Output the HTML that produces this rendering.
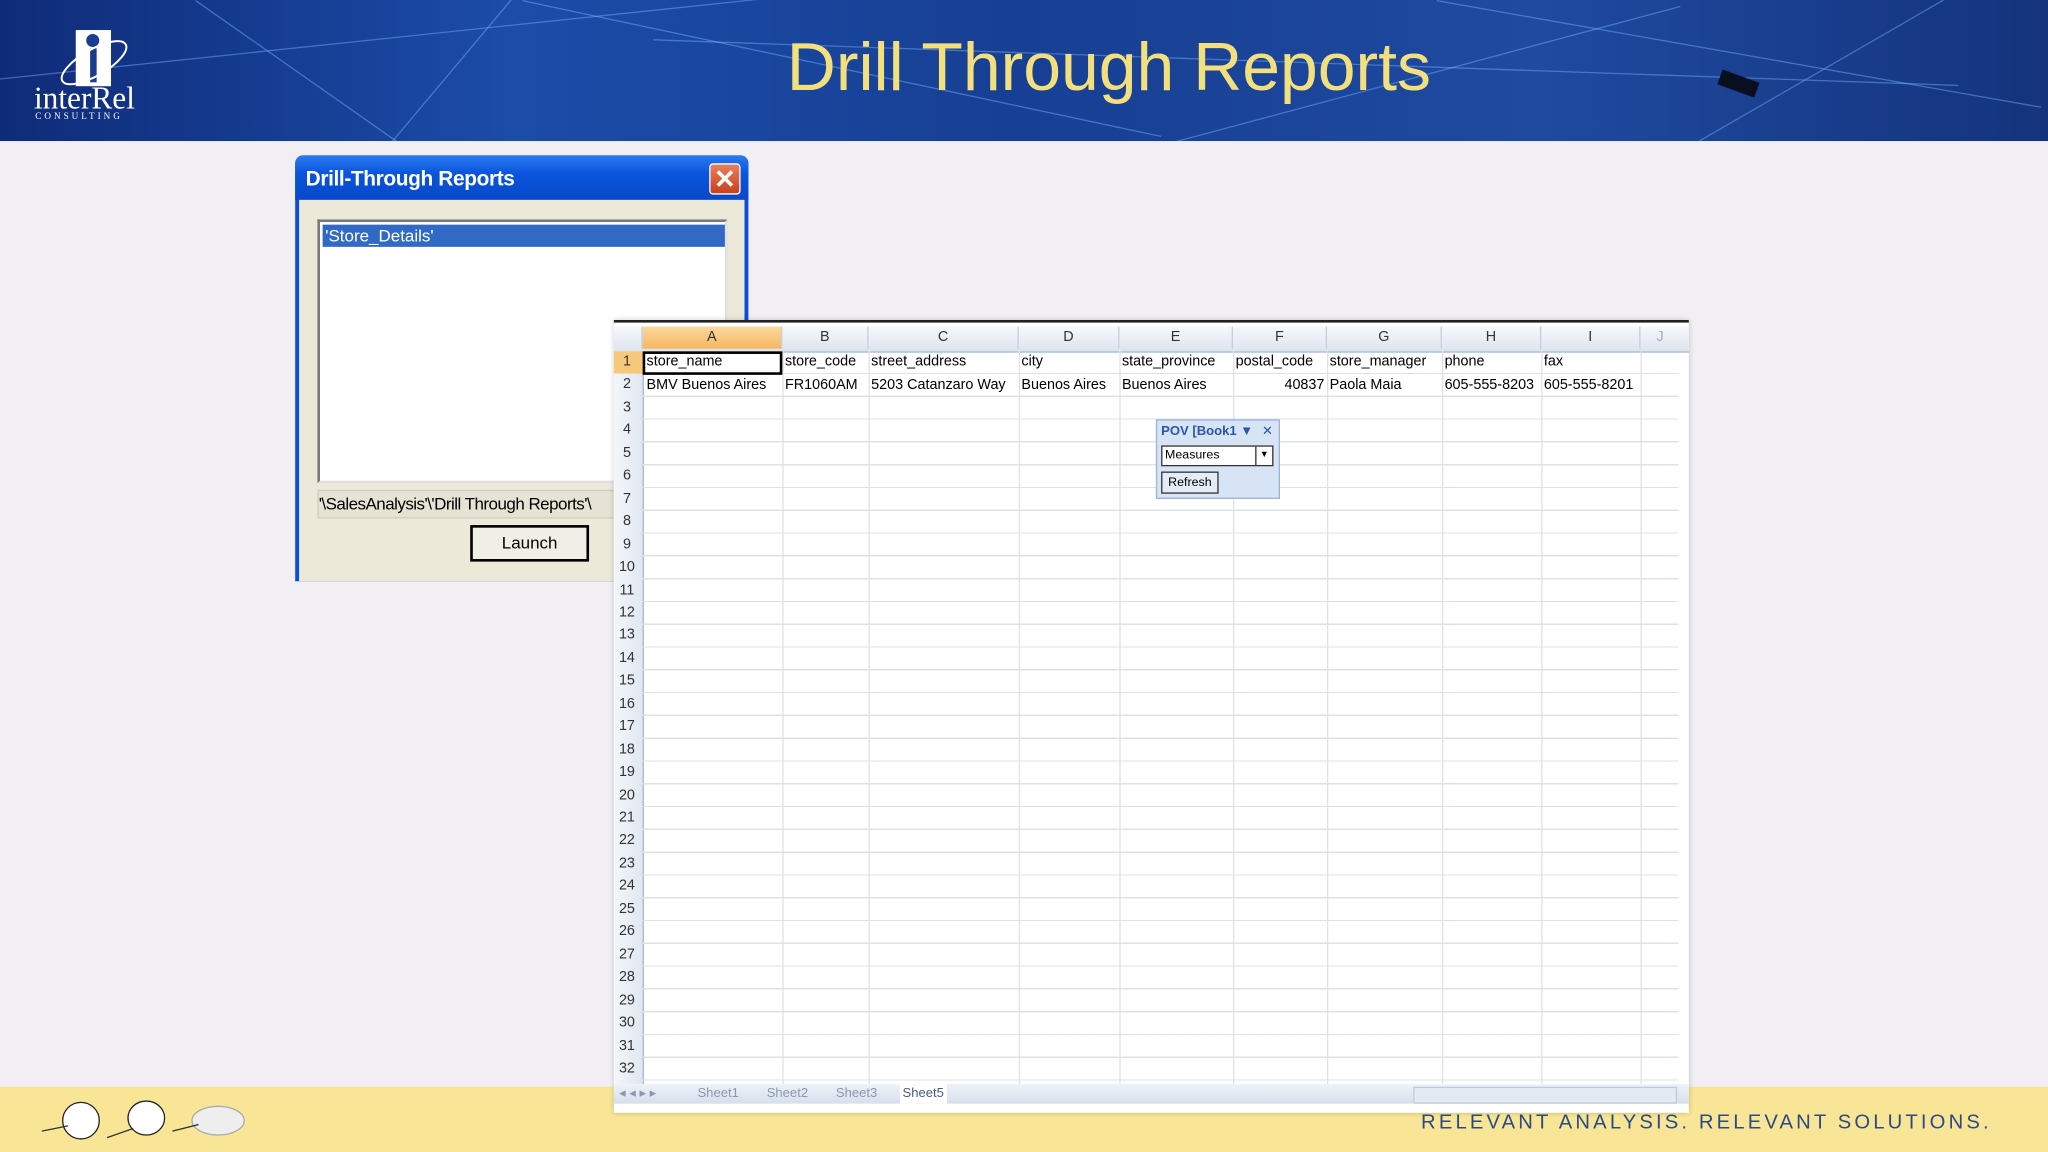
<!DOCTYPE html>
<html><head><meta charset="utf-8"><style>
html,body{margin:0;padding:0;width:2048px;height:1152px;overflow:hidden;background:#f1eff3;}
#w{position:absolute;left:0;top:0;width:1568px;height:882px;transform:scale(1.306122);transform-origin:0 0;font-family:"Liberation Sans",sans-serif;}
.a{position:absolute;}
#hdr{left:0;top:0;width:1568px;height:108px;background:linear-gradient(90deg,#0f2b78 0%,#1b4ca8 25%,#173f93 50%,#1f4aa0 75%,#14337c 100%);overflow:hidden;}
.ln{position:absolute;height:1px;background:rgba(120,180,255,.45);transform-origin:0 0;}
#title{left:0;width:1568px;top:22px;text-align:center;padding-left:130px;box-sizing:border-box;color:#f3e07c;font-size:52px;}
#foot{left:0;top:832px;width:1568px;height:50px;background:#f8e696;}
#dlg{left:226px;top:119px;width:347px;height:326px;background:#0a4fd6;border-radius:6px 6px 0 0;}
.c{position:absolute;font-size:11px;color:#000;white-space:nowrap;line-height:17px;}
.rn{position:absolute;left:0;width:20px;text-align:center;font-size:11px;color:#333;line-height:17.45px;}
.ch{position:absolute;top:0;height:17px;text-align:center;font-size:11px;line-height:17px;color:#333;border-right:1px solid #c5cfdc;box-sizing:border-box;}
.vl{position:absolute;top:22px;width:1px;height:561px;background:#dde2ea;}
</style></head><body><div id="w">
<div id="hdr" class="a">
<div class="ln" style="left:150px;top:0;width:300px;transform:rotate(35deg)"></div>
<div class="ln" style="left:300px;top:108px;width:250px;transform:rotate(-50deg)"></div>
<div class="ln" style="left:0;top:60px;width:700px;transform:rotate(-6deg)"></div>
<div class="ln" style="left:400px;top:0;width:500px;transform:rotate(12deg)"></div>
<div class="ln" style="left:900px;top:108px;width:400px;transform:rotate(-15deg)"></div>
<div class="ln" style="left:1100px;top:0;width:470px;transform:rotate(10deg)"></div>
<div class="ln" style="left:1300px;top:108px;width:300px;transform:rotate(-30deg)"></div>
<div class="ln" style="left:500px;top:30px;width:1000px;transform:rotate(2deg)"></div>
<div class="a" style="left:1316px;top:58px;width:30px;height:12px;background:#0a0f20;transform:rotate(20deg)"></div>
<svg class="a" style="left:40px;top:18px" width="70" height="60"><rect x="18" y="5" width="27" height="43" fill="#fff"/><circle cx="31" cy="13" r="5" fill="#1a3d90"/><rect x="29" y="19" width="5" height="26" fill="#1a3d90"/><ellipse cx="32" cy="30" rx="28" ry="10" fill="none" stroke="#fff" stroke-width="1.5" transform="rotate(-30 32 30)"/></svg>
<div class="a" style="left:26px;top:63px;color:#fff;font-family:'Liberation Serif',serif;font-size:24px;">interRel</div>
<div class="a" style="left:27px;top:85px;color:#fff;font-family:'Liberation Serif',serif;font-size:7px;letter-spacing:2.3px;">CONSULTING</div>
<div id="title" class="a">Drill Through Reports</div>
</div>
<div id="foot" class="a">
<svg class="a" style="left:22px;top:4px" width="170" height="42"><g fill="#fff" stroke="#222" stroke-width="1"><ellipse cx="40" cy="22" rx="14" ry="14"/><ellipse cx="90" cy="20" rx="14" ry="13"/><ellipse cx="145" cy="22" rx="20" ry="11" fill="#eee" stroke="#aaa"/></g><g stroke="#333" stroke-width="1"><line x1="10" y1="30" x2="30" y2="26"/><line x1="60" y1="35" x2="80" y2="28"/><line x1="110" y1="30" x2="130" y2="25"/></g></svg>
<div class="a" style="left:1088px;top:19px;color:#2b4a86;font-size:15.5px;letter-spacing:2.4px;">RELEVANT ANALYSIS. RELEVANT SOLUTIONS.</div>
</div>
<div id="dlg" class="a">
<div class="a" style="left:0;top:0;width:347px;height:34px;border-radius:6px 6px 0 0;background:linear-gradient(#2a7af0,#0a55dc 40%,#0848c8)"></div>
<div class="a" style="left:8px;top:10px;color:#fff;font-size:16px;font-weight:bold;letter-spacing:-.3px;">Drill-Through Reports</div>
<div class="a" style="left:317px;top:6px;width:24px;height:24px;border:1px solid #fff;border-radius:3px;background:linear-gradient(#e8805a,#c9401c);color:#fff;font-size:20px;font-weight:bold;line-height:24px;text-align:center;box-sizing:border-box;">✕</div>
<div class="a" style="left:3px;top:34px;width:341px;height:292px;background:#ece9d8;"></div>
<div class="a" style="left:17px;top:49px;width:314px;height:202px;background:#fff;border:2px solid #7a7a7a;border-right-color:#e0e0e0;border-bottom-color:#e0e0e0;box-sizing:border-box;"></div>
<div class="a" style="left:21px;top:53px;width:308px;height:17px;background:#316ac5;color:#fff;font-size:13px;line-height:17px;padding-left:2px;box-sizing:border-box;">'Store_Details'</div>
<div class="a" style="left:17px;top:256px;width:230px;height:20px;background:#e6e3d4;border:1px solid #d0cdc0;font-size:13px;line-height:20px;overflow:hidden;white-space:nowrap;letter-spacing:-.4px;">'\SalesAnalysis'\'Drill Through Reports'\</div>
<div class="a" style="left:134px;top:283px;width:91px;height:28px;border:2px solid #000;background:#f0efe6;box-sizing:border-box;text-align:center;font-size:13px;line-height:24px;">Launch</div>
</div>
<div class="a" style="left:470px;top:245px;width:823px;height:605px;background:#fff;border-top:2px solid #222;box-shadow:0 0 4px rgba(0,0,0,.2);">
<div class="a" style="left:0;top:3px;width:823px;height:19px;background:linear-gradient(#f6f8fc,#dde4ee);border-bottom:1px solid #9eb6ce;"></div>
<div class="a" style="left:0;top:22px;width:22px;height:561px;background:linear-gradient(90deg,#f4f6fa,#e1e7f0);border-right:1px solid #9eb6ce;"></div>
<div class="a" style="left:22px;top:22px;width:793px;height:561px;background:repeating-linear-gradient(to bottom,transparent 0,transparent 16.45px,#dde2ea 16.45px,#dde2ea 17.45px);"></div>
<div style="position:absolute;left:0;top:3px;">
<div class="ch" style="left:0;width:22px;"></div>
<div class="ch" style="left:22px;width:107px;background:linear-gradient(#fbd9a0,#f6b660);">A</div>
<div class="ch" style="left:129px;width:66px;">B</div>
<div class="ch" style="left:195px;width:115px;">C</div>
<div class="ch" style="left:310px;width:77px;">D</div>
<div class="ch" style="left:387px;width:87px;">E</div>
<div class="ch" style="left:474px;width:72px;">F</div>
<div class="ch" style="left:546px;width:88px;">G</div>
<div class="ch" style="left:634px;width:76px;">H</div>
<div class="ch" style="left:710px;width:76px;">I</div>
<div class="ch" style="left:786px;width:30px;border:0;color:#aab;">J</div>
</div>
<div class="vl" style="left:129px"></div><div class="vl" style="left:195px"></div><div class="vl" style="left:310px"></div><div class="vl" style="left:387px"></div><div class="vl" style="left:474px"></div><div class="vl" style="left:546px"></div><div class="vl" style="left:634px"></div><div class="vl" style="left:710px"></div><div class="vl" style="left:786px"></div>
<div class="a" style="left:0;top:22px;width:22px;height:17.45px;background:#f8c87a;"></div>
<div class="a" style="left:0;top:22px;">
<div class="rn" style="top:0">1</div><div class="rn" style="top:17.45px">2</div><div class="rn" style="top:34.9px">3</div><div class="rn" style="top:52.35px">4</div><div class="rn" style="top:69.8px">5</div><div class="rn" style="top:87.25px">6</div><div class="rn" style="top:104.7px">7</div><div class="rn" style="top:122.15px">8</div><div class="rn" style="top:139.6px">9</div><div class="rn" style="top:157.05px">10</div><div class="rn" style="top:174.5px">11</div><div class="rn" style="top:191.95px">12</div><div class="rn" style="top:209.4px">13</div><div class="rn" style="top:226.85px">14</div><div class="rn" style="top:244.3px">15</div><div class="rn" style="top:261.75px">16</div><div class="rn" style="top:279.2px">17</div><div class="rn" style="top:296.65px">18</div><div class="rn" style="top:314.1px">19</div><div class="rn" style="top:331.55px">20</div><div class="rn" style="top:349px">21</div><div class="rn" style="top:366.45px">22</div><div class="rn" style="top:383.9px">23</div><div class="rn" style="top:401.35px">24</div><div class="rn" style="top:418.8px">25</div><div class="rn" style="top:436.25px">26</div><div class="rn" style="top:453.7px">27</div><div class="rn" style="top:471.15px">28</div><div class="rn" style="top:488.6px">29</div><div class="rn" style="top:506.05px">30</div><div class="rn" style="top:523.5px">31</div><div class="rn" style="top:540.95px">32</div>
</div>
<div class="a" style="left:22px;top:22px;width:107px;height:18px;border:2px solid #000;box-sizing:border-box;background:#fff;"></div>
<div class="c" style="left:25px;top:22px">store_name</div><div class="c" style="left:131px;top:22px">store_code</div><div class="c" style="left:197px;top:22px">street_address</div><div class="c" style="left:312px;top:22px">city</div><div class="c" style="left:389px;top:22px">state_province</div><div class="c" style="left:476px;top:22px">postal_code</div><div class="c" style="left:548px;top:22px">store_manager</div><div class="c" style="left:636px;top:22px">phone</div><div class="c" style="left:712px;top:22px">fax</div>
<div class="c" style="left:25px;top:40px">BMV Buenos Aires</div><div class="c" style="left:131px;top:40px">FR1060AM</div><div class="c" style="left:197px;top:40px">5203 Catanzaro Way</div><div class="c" style="left:312px;top:40px">Buenos Aires</div><div class="c" style="left:389px;top:40px">Buenos Aires</div><div class="c" style="left:474px;top:40px;width:70px;text-align:right">40837</div><div class="c" style="left:548px;top:40px">Paola Maia</div><div class="c" style="left:636px;top:40px">605-555-8203</div><div class="c" style="left:712px;top:40px">605-555-8201</div>
<div class="a" style="left:415px;top:74px;width:93px;height:59px;background:#d6e4f6;border:1px solid #9ab4d8;">
<div class="a" style="left:3px;top:3px;font-size:10px;font-weight:bold;color:#2a56a8;">POV [Book1 ▼ <span style="font-weight:normal;margin-left:4px">✕</span></div>
<div class="a" style="left:3px;top:19px;width:86px;height:16px;background:#fff;border:1px solid #333;box-sizing:border-box;font-size:9.5px;line-height:14px;padding-left:2px;">Measures<span style="position:absolute;right:0;top:0;width:12px;height:14px;border-left:1px solid #333;text-align:center;font-size:7px;">▼</span></div>
<div class="a" style="left:3px;top:39px;width:44px;height:17px;background:#e4ecf8;border:1px solid #333;box-sizing:border-box;font-size:9.5px;line-height:15px;text-align:center;">Refresh</div>
</div>
<div class="a" style="left:0;top:583px;width:823px;height:15px;background:linear-gradient(#eef2f8,#d6dfec);font-size:10px;color:#8a98b0;line-height:15px;">
<span style="position:absolute;left:4px">◂ ◂ ▸ ▸</span><span style="position:absolute;left:64px">Sheet1</span><span style="position:absolute;left:117px">Sheet2</span><span style="position:absolute;left:170px">Sheet3</span><span style="position:absolute;left:219px;color:#4a5a80;background:#fff;padding:0 2px">Sheet5</span>
<div class="a" style="left:612px;top:2px;width:200px;height:11px;background:#e4eaf3;border:1px solid #c0cbdb;"></div>
</div>
</div>
</div></body></html>
